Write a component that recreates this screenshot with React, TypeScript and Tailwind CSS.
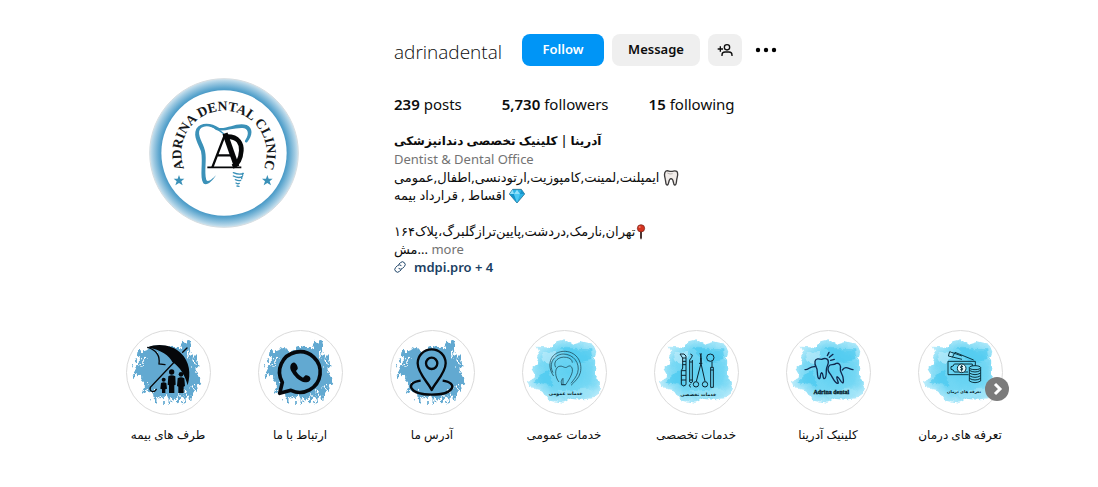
import type { ReactNode } from "react";

const BRUSH =
  "M78 92 L100 84 L128 92 L160 78 L196 86 L208 62 L224 60 L228 82 L222 100 L246 112 L250 140 L246 160 L256 182 L246 206 L238 224 L218 232 L210 250 L202 226 L190 236 L182 250 L174 230 L150 238 L134 228 L116 236 L112 212 L88 218 L90 190 L76 170 L56 152 L60 136 L78 132 L60 112 Z";

const WASH =
  "M84 90 L76 74 L104 76 L132 80 L136 64 L160 58 L184 74 L212 66 L246 74 L256 98 L248 122 L262 148 L256 178 L270 206 L252 234 L222 238 L190 234 L150 248 L112 240 L94 212 L56 204 L48 184 L76 172 L62 148 L84 130 L72 108 Z";

const Brush = () => (
  <>
    <filter id="brush" x="-20%" y="-20%" width="140%" height="140%">
      <feTurbulence
        type="fractalNoise"
        baseFrequency="0.09 0.05"
        numOctaves="3"
        seed="4"
      />
      <feDisplacementMap
        in="SourceGraphic"
        scale="34"
        xChannelSelector="R"
        yChannelSelector="G"
      />
    </filter>
    <g filter="url(#brush)" fill="#62a9d1">
      <path d={BRUSH} />
      <path
        d="M206 74 l8 -8 M232 128 l10 -12 M122 224 v22 M144 230 v16 M166 228 v24 M224 226 l4 16 M66 158 l-8 18 M84 100 l-14 2"
        stroke="#62a9d1"
        strokeWidth="5"
      />
      <path
        d="M82 122 l12 -8 M72 142 l14 -2 M234 116 l4 20 M228 90 l-8 22 M230 196 l10 14 M94 204 l8 12 M128 222 v16 M158 226 v14 M192 222 v20 M212 214 v16"
        stroke="#fff"
        strokeWidth="4"
      />
    </g>
  </>
);

const Wash = () => (
  <>
    <defs>
      <filter id="wash" x="-20%" y="-20%" width="140%" height="140%">
        <feTurbulence
          type="fractalNoise"
          baseFrequency="0.03"
          numOctaves="3"
          seed="8"
        />
        <feDisplacementMap
          in="SourceGraphic"
          scale="24"
          xChannelSelector="R"
          yChannelSelector="G"
        />
        <feGaussianBlur stdDeviation="2" />
      </filter>
      <radialGradient id="washFill" cx="0.55" cy="0.5" r="0.55">
        <stop offset="0" stopColor="#5fd0f1" />
        <stop offset="0.6" stopColor="#73d7f4" />
        <stop offset="1" stopColor="#b5eafa" />
      </radialGradient>
    </defs>
    <g filter="url(#wash)">
      <path d={WASH} fill="url(#washFill)" />
      <path
        d="M150 88 L240 88 L244 120 L190 130 Z M70 186 L110 150 L128 196 Z"
        fill="#43c6ee"
        opacity="0.6"
      />
      <path d="M92 96 L140 92 L120 130 L96 124 Z" fill="#c4effb" opacity="0.6" />
      <path
        d="M140 214 L230 206 L244 224 L160 236 Z"
        fill="#a4e6f8"
        opacity="0.6"
      />
    </g>
  </>
);

const Umbrella = () => (
  <>
    <Brush />
    <path
      d="M98 82 C130 68 172 78 192 96 C222 116 228 156 218 196 C214 172 204 154 190 144 C180 134 172 128 168 130 L150 134 C152 124 146 118 140 120 C136 100 120 88 98 82 Z"
      fill="#62a9d1"
    />
    <path
      d="M98 82 C130 68 176 76 198 100 C224 126 228 160 218 196 C210 166 196 142 172 126 C164 108 138 90 98 82 Z"
      fill="#05070a"
    />
    <path
      d="M98 82 C124 90 136 104 132 132 L150 134 M203 97 L216 84 M178 126 L106 202 C102 214 116 220 124 208"
      fill="none"
      stroke="#05070a"
      strokeWidth="4"
      strokeLinecap="round"
    />
    <g fill="#05070a">
      <circle cx="146" cy="179" r="6" />
      <path d="M138 189 Q146 184 154 189 L156 206 L151 208 L151 219 H141 L141 208 L136 206 Z" />
      <circle cx="170" cy="156" r="8" />
      <path d="M160 169 Q170 162 181 169 L182 194 L178 196 L178 219 H162 L162 196 L158 194 Z" />
      <circle cx="198" cy="163" r="7" />
      <path d="M188 175 Q198 169 208 175 L210 198 L206 200 L206 219 H190 L190 200 L186 198 Z" />
    </g>
  </>
);

const Whatsapp = () => (
  <>
    <Brush />
    <path
      d="M98 220 L106 187 A61 61 0 1 1 132 211 Z"
      fill="#62a9d1"
      stroke="#05080c"
      strokeWidth="11"
      strokeLinejoin="round"
    />
    <path
      d="M135 130 C128 136 128 148 136 158 C146 174 160 184 174 187 C184 188 192 182 190 174 C188 168 178 164 174 167 L168 173 C158 168 152 162 147 153 L152 147 C154 142 148 130 143 128 C140 127 137 128 135 130 Z"
      fill="#05080c"
    />
  </>
);

const MapPin = () => (
  <>
    <Brush />
    <g fill="none" stroke="#05080c" strokeWidth="7" strokeLinejoin="round">
      <path d="M125 182 C76 188 90 224 158 224 C228 224 238 188 191 182" />
      <path d="M158 210 C148 188 116 160 116 130 A42 42 0 0 1 200 130 C200 160 168 188 158 210 Z" />
      <circle cx="158" cy="130" r="17" />
    </g>
  </>
);

const ToothArc = () => (
  <>
    <Wash />
    <g fill="none" stroke="#12323f" strokeWidth="2">
      <path d="M128 168 C106 138 116 98 156 94 C194 92 216 124 208 158 C204 174 190 186 180 196" />
      <path d="M126 158 C112 132 128 104 156 102 C188 102 208 130 200 158 C196 170 188 180 180 190" />
      <path d="M134 142 C124 124 144 108 166 112 C178 114 184 120 184 128" />
      <path d="M144 186 C132 172 130 146 142 140 C156 134 160 148 170 140 C182 132 188 148 182 162 C178 174 168 188 164 194" />
      <path d="M154 176 q-6 10 -2 18 h12 M150 194 h14 M156 174 v20" />
    </g>
    <text
      x="164"
      y="226"
      textAnchor="middle"
      className="fill-[#06242c] font-[DejaVu_Sans,sans-serif] text-[14px] font-bold"
    >
      خدمات عمومی
    </text>
  </>
);

const Instruments = () => (
  <>
    <Wash />
    <g fill="none" stroke="#0b2430" strokeWidth="3" strokeLinejoin="round">
      <path d="M111 102 h12 l6 6 v86 q-6 8 -14 0 v-42 l4 -8 v-30 z M115 152 h14 M119 114 h10 M119 124 h10 M119 134 h10 M115 166 h14 M115 180 h14" />
      <path d="M142 102 q10 2 4 10 l-6 8 v66 q4 6 8 0 v-66 M140 126 h8 M140 180 h8 M142 192 q-8 6 2 10" />
      <path d="M171 100 q6 12 4 26 l-15 58 M175 100 q-4 14 -2 26 l13 58 M168 130 h10" />
      <circle cx="159" cy="193" r="8" />
      <circle cx="186" cy="193" r="8" />
      <circle cx="202" cy="113" r="11" />
      <path d="M207 124 v18 M203 142 h8 v60 h-8 z M203 150 h8" />
    </g>
    <text
      x="166"
      y="229"
      textAnchor="middle"
      className="fill-[#06242c] font-[DejaVu_Sans,sans-serif] text-[14px] font-bold"
    >
      خدمات تخصصی
    </text>
  </>
);

const Teeth = () => (
  <>
    <Wash />
    <g
      fill="none"
      stroke="#10294f"
      strokeWidth="4"
      strokeLinecap="round"
      strokeLinejoin="round"
    >
      <path d="M90 149 C102 150 104 138 120 140" />
      <path d="M120 124 C122 114 132 116 140 118 C148 114 160 114 160 126 C160 136 154 140 154 150 C154 164 152 176 148 176 C142 176 146 160 140 158 C134 160 138 178 132 176 C124 172 130 150 124 142 C120 136 119 130 120 124 Z" />
      <path d="M162 138 C166 130 176 138 184 130 C194 128 198 138 196 146 C194 154 202 162 204 172 C206 184 206 190 202 188 C196 186 194 172 186 170 C182 174 194 190 188 190 C178 190 172 168 164 160 C158 152 158 144 162 138 Z" />
      <path d="M202 150 C212 136 220 146 234 149" />
      <path d="M157 107 L162 97 M163 112 L174 103 M167 121 L178 118" />
    </g>
    <text
      x="169"
      y="223"
      textAnchor="middle"
      className="fill-[#08222e] stroke-[#08222e] font-[Liberation_Serif,serif] text-[18px] font-bold"
    >
      Adrina dental
    </text>
  </>
);

const Money = () => (
  <>
    <Wash />
    <g fill="none" stroke="#0b3440" strokeWidth="3" strokeLinejoin="round">
      <path d="M124 108 L128 95 L165 108 M136 112 L144 97 L200 120 M124 108 L165 118" />
      <path d="M185 164 H123 V124 H205 V138" />
      <path d="M183 156 H142 Q140 148 132 148 V140 Q140 140 142 132 H196 V138" />
      <circle cx="164" cy="145" r="13" fill="#e8f9fd" />
      <path d="M168 140 q-7 -3 -8 1 q1 4 7 5 q1 5 -7 3 M164 135 v20" />
      <g fill="#67d1ef">
        <path d="M187 143 v40 q17 10 34 0 v-40" />
        <ellipse cx="204" cy="143" rx="17" ry="6" />
      </g>
      <path d="M187 151 q17 10 34 0 M187 159 q17 10 34 0 M187 167 q17 10 34 0 M187 175 q17 10 34 0" />
    </g>
    <text
      x="171"
      y="218"
      textAnchor="middle"
      className="fill-[#06242c] font-[DejaVu_Sans,sans-serif] text-[12px] font-bold"
    >
      تعرفه های درمان
    </text>
  </>
);

const highlights: { title: string; art: ReactNode }[] = [
  { title: "طرف های بیمه", art: <Umbrella /> },
  { title: "ارتباط با ما", art: <Whatsapp /> },
  { title: "آدرس ما", art: <MapPin /> },
  { title: "خدمات عمومی", art: <ToothArc /> },
  { title: "خدمات تخصصی", art: <Instruments /> },
  { title: "کلینیک آدرینا", art: <Teeth /> },
  { title: "تعرفه های درمان", art: <Money /> },
];

const stats = [
  { value: "239", label: "posts" },
  { value: "5,730", label: "followers" },
  { value: "15", label: "following" },
];

const Logo = () => (
  <svg
    viewBox="27 24 450 450"
    className="size-[150px]"
    role="img"
    aria-label="Adrina Dental Clinic"
  >
    <defs>
      <radialGradient id="ring">
        <stop offset="0.83" stopColor="#3f93c2" />
        <stop offset="0.88" stopColor="#62a9d0" />
        <stop offset="0.95" stopColor="#9fcae2" />
        <stop offset="1" stopColor="#cfe4ef" />
      </radialGradient>
      <path id="arc" d="M164 343 A128 128 0 1 1 340 343" />
    </defs>
    <circle cx="252" cy="249" r="223" fill="url(#ring)" stroke="#d6dde1" strokeWidth="3" />
    <circle cx="252" cy="249" r="188" fill="#fff" />
    <text
      textAnchor="middle"
      className="fill-[#15181b] font-[Liberation_Serif,serif] text-[41px] font-bold"
    >
      <textPath href="#arc" startOffset="50%">
        ADRINA DENTAL CLINIC
      </textPath>
    </text>
    <g fill="#3b91b8">
      <path d="M117 315 l4 11 12 0 -9 8 4 12 -11 -7 -11 7 4 -12 -9 -8 12 0 z" />
      <path d="M382 315 l4 11 12 0 -9 8 4 12 -11 -7 -11 7 4 -12 -9 -8 12 0 z" />
      <path d="M322 216 C338 196 340 174 320 165 C292 156 266 176 238 174 C214 158 182 156 169 176 C158 200 176 222 183 244 C190 276 178 322 190 340 C200 350 216 334 228 316 C216 328 204 338 199 330 C192 304 201 268 195 242 C189 218 170 194 180 178 C192 164 214 168 228 180 C252 186 276 174 304 174 C324 172 330 190 316 210 C312 216 318 220 322 216 Z" />
    </g>
    <path
      d="M206 165 C228 172 242 184 252 192"
      fill="none"
      stroke="#3b91b8"
      strokeWidth="4"
    />
    <path
      d="M280 308 q18 8 30 2 M280 318 q16 8 27 2 M286 329 q10 5 16 2 M288 339 q6 4 10 1 M291 348 l6 1 M308 310 v6 M305 320 v6"
      fill="none"
      stroke="#3b91b8"
      strokeWidth="4"
      strokeLinecap="round"
    />
    <g fill="none" stroke="#060708">
      <path d="M255 190 L290 290" strokeWidth="16" />
      <path d="M254 196 L217 292 M230 256 H280" strokeWidth="7" />
      <path d="M202 292 H304" strokeWidth="5" />
      <path d="M262 200 C296 200 305 222 304 242 C302 270 292 284 278 290" strokeWidth="14" />
    </g>
  </svg>
);

const Tooth = () => (
  <svg
    viewBox="0 0 48 48"
    className="mr-1 inline size-4 align-text-bottom"
    aria-hidden="true"
  >
    <path
      d="M9 3 C15 0 19 5 24 4 C30 5 35 0 41 4 C48 10 42 21 41 30 C40 40 39 46 35 45 C29 44 34 27 24 26 C15 27 19 44 13 45 C8 46 9 37 7 29 C6 20 0 10 9 3 Z"
      fill="#f1ece9"
      stroke="#3c3a3a"
      strokeWidth="4"
    />
    <path d="M13 9 q8 5 16 2" fill="none" stroke="#b9b3b1" strokeWidth="3" />
  </svg>
);

const Diamond = () => (
  <svg
    viewBox="0 0 48 48"
    className="mr-1 inline size-4 align-text-bottom"
    aria-hidden="true"
  >
    <path
      d="M11 4 H37 L47 18 L24 45 L1 18 Z"
      fill="#2db3e6"
      stroke="#125b7c"
      strokeWidth="2"
      strokeLinejoin="round"
    />
    <path d="M11 5 L15 18 H2 Z M24 5 L33 18 H15 Z" fill="#8fe0fb" />
    <path d="M37 5 L33 18 H46 Z M15 18 L24 44 L2 18 Z" fill="#1695cc" />
    <path d="M15 18 H33 L24 44 Z" fill="#4cc8f3" />
  </svg>
);

const Pushpin = () => (
  <svg
    viewBox="0 0 32 48"
    className="inline h-4 w-3 align-text-bottom"
    aria-hidden="true"
  >
    <path d="M13 20 H19 V42 L16 47 L13 42 Z" fill="#4a3533" />
    <circle cx="16" cy="13" r="11" fill="#d5331f" stroke="#6e1e16" strokeWidth="2" />
    <circle cx="12" cy="9" r="3" fill="#f0806f" />
  </svg>
);

const App = () => {
  return (
    <main className="min-h-screen bg-white font-['Noto_Sans','DejaVu_Sans',sans-serif] text-[#0c0c0c]">
      <div className="mx-auto max-w-[934px] pt-[34px]">
        <header className="flex">
          <div className="flex w-[284px] shrink-0 justify-center pt-11">
            <Logo />
          </div>

          <section className="ml-7 flex min-w-0 flex-1 flex-col">
            <div className="flex h-8 items-center">
              <h2 className="mr-5 pt-1 font-['Open_Sans',sans-serif] text-[19px] leading-6 font-light">
                adrinadental
              </h2>
              <button className="mr-2 h-8 w-[82px] rounded-lg bg-[#0095f6] text-[13px] font-semibold text-white">
                Follow
              </button>
              <button className="mr-2 h-8 w-[88px] rounded-lg bg-[#efefef] text-[13px] font-semibold">
                Message
              </button>
              <button
                aria-label="Similar accounts"
                className="mr-3 flex h-8 w-[34px] items-center justify-center rounded-lg bg-[#efefef]"
              >
                <svg viewBox="0 0 24 24" className="size-4" fill="none" stroke="currentColor" strokeWidth="2">
                  <circle cx="15" cy="8" r="4" />
                  <path d="M7.5 21 v-1.500 a4.500 4.500 0 0 1 4.500 -4.500 h6 a4.500 4.500 0 0 1 4.500 4.500 V21" />
                  <path d="M1 10.500 h8 M5 6.500 v8" />
                </svg>
              </button>
              <button aria-label="Options">
                <svg viewBox="0 0 24 24" className="size-6">
                  <circle cx="4" cy="12" r="2.200" />
                  <circle cx="12" cy="12" r="2.200" />
                  <circle cx="20" cy="12" r="2.200" />
                </svg>
              </button>
            </div>

            <ul className="mt-[26px] flex gap-10 text-[15px] leading-6">
              {stats.map((item) => (
                <li key={item.label}>
                  <span className="font-semibold">{item.value}</span>{" "}
                  {item.label}
                </li>
              ))}
            </ul>

            <div className="mt-4 text-[13px] leading-[18px]">
              <h1 dir="rtl" className="h-[18px] text-left text-[12px] font-semibold">
                آدرینا | کلینیک تخصصی دندانپزشکی
              </h1>
              <p className="text-[#737373]">Dentist &amp; Dental Office</p>
              <p dir="rtl" className="h-[18px] text-left">
                <Tooth /> ایمپلنت,لمینت,کامپوزیت,ارتودنسی,اطفال,عمومی
              </p>
              <p dir="rtl" className="h-[18px] text-left">
                <Diamond /> اقساط , قرارداد بیمه
              </p>
              <p dir="rtl" className="mt-[18px] h-[18px] text-left">
                <Pushpin />
                تهران,نارمک,دردشت,پایین‌ترازگلبرگ،پلاک۱۶۴
              </p>
              <p className="h-[18px]">
                مش...{" "}
                <button className="text-[#737373]">more</button>
              </p>
              <a
                href="#links"
                className="flex w-fit items-center font-semibold text-[#1b3f63]"
              >
                <svg
                  viewBox="0 0 24 24"
                  className="mr-2 size-3"
                  fill="none"
                  stroke="#1f4468"
                  strokeWidth="2"
                  strokeLinecap="round"
                >
                  <path d="m9.700 6.500 3.200-3.200a5.500 5.500 0 0 1 7.800 7.800l-3.600 3.600a5.500 5.500 0 0 1-7.300.5" />
                  <path d="m14.300 17.500-3.200 3.200a5.500 5.500 0 0 1-7.800-7.800l3.600-3.600a5.500 5.500 0 0 1 7.300-.5" />
                </svg>
                mdpi.pro + 4
              </a>
            </div>
          </section>
        </header>

        <nav className="relative mt-[54px] ml-5 w-fit">
          <ul className="flex">
            {highlights.map((item) => (
              <li key={item.title} className="w-[132px]">
                <a href="#highlight" className="flex flex-col items-center">
                  <span className="size-[85px] overflow-hidden rounded-full border border-[#dbdbdb]">
                    <svg viewBox="36 33 249 249" className="size-full" aria-hidden="true">
                      {item.art}
                    </svg>
                  </span>
                  <span dir="rtl" className="mt-3 text-[12px] leading-4">
                    {item.title}
                  </span>
                </a>
              </li>
            ))}
          </ul>
          <button
            aria-label="Next"
            className="absolute top-[47px] right-[17px] flex size-6 items-center justify-center rounded-full bg-[#7b7b7b]"
          >
            <svg viewBox="0 0 24 24" className="size-6" fill="none" stroke="#fff" strokeWidth="3">
              <path d="M10 7 l5 5 -5 5" />
            </svg>
          </button>
        </nav>
      </div>
    </main>
  );
};

export default App;
